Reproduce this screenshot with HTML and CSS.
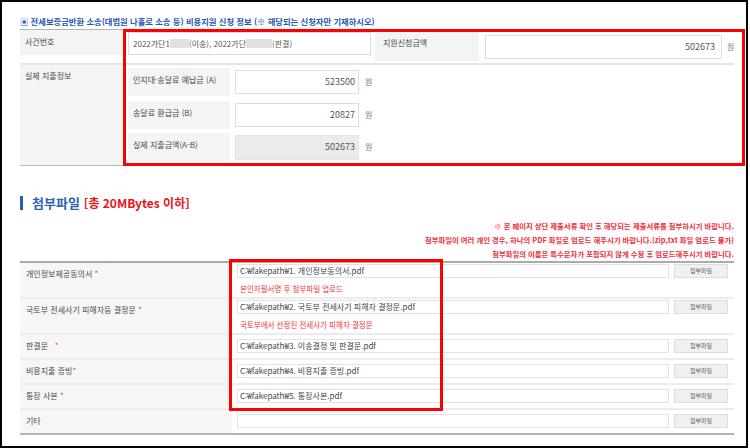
FILE: index.html
```html
<!DOCTYPE html>
<html lang="ko">
<head>
<meta charset="utf-8">
<title>비용지원 신청 정보</title>
<link rel="stylesheet" href="styles.css">
</head>
<body>
<div class="frame">
  <div class="title1">▣ 전세보증금반환 소송(대법원 나홀로 소송 등) 비용지원 신청 정보 (※ 해당되는 신청자만 기재하시오)</div>

  <div class="t1">
    <div class="row r1">
      <div class="th"><div class="lab">사건번호</div></div>
      <div class="td">
        <div class="case">2022가단1<span class="blur b1"></span>(이송), 2022가단<span class="blur b2"></span>(판결)</div>
        <div class="sublab">지원신청금액</div>
        <div class="field">
          <div class="amt">502673</div>
          <span class="won">원</span>
        </div>
      </div>
    </div>
    <div class="row r2">
      <div class="th"><div class="lab tall">실제 지출정보</div></div>
      <div class="td subs">
        <div class="subrow">
          <div class="sublab2">인지대·송달료 예납금 (A)</div>
          <div class="num">523500</div>
          <span class="won">원</span>
        </div>
        <div class="subrow">
          <div class="sublab2">송달료 환급금 (B)</div>
          <div class="num">20827</div>
          <span class="won">원</span>
        </div>
        <div class="subrow">
          <div class="sublab2">실제 지출금액(A-B)</div>
          <div class="num ro">502673</div>
          <span class="won">원</span>
        </div>
      </div>
    </div>
  </div>

  <div class="title2"><span class="bar"></span><span class="blue">첨부파일</span><span class="red">[총 20MBytes 이하]</span></div>

  <div class="notes">
    <div>※ 본 페이지 상단 제출서류 확인 후 해당되는 제출서류를 첨부하시기 바랍니다.</div>
    <div>첨부파일이 여러 개인 경우, 하나의 PDF 파일로 업로드 해주시기 바랍니다.(zip,txt 파일 업로드 불가)</div>
    <div>첨부파일의 이름은 특수문자가 포함되지 않게 수정 후 업로드해주시기 바랍니다.</div>
  </div>

  <div class="t2">
    <div class="frow tall">
      <div class="flab">개인정보제공동의서 <span class="ast">*</span></div>
      <div class="cell">
        <div class="fline"><div class="file">C:₩fakepath₩1. 개인정보동의서.pdf</div><div class="btn">첨부파일</div></div>
        <div class="note">본인자필서명 후 첨부파일 업로드</div>
      </div>
    </div>
    <div class="frow tall">
      <div class="flab">국토부 전세사기 피해자등 결정문 <span class="ast">*</span></div>
      <div class="cell">
        <div class="fline"><div class="file">C:₩fakepath₩2. 국토부 전세사기 피해자 결정문.pdf</div><div class="btn">첨부파일</div></div>
        <div class="note">국토부에서 선정된 전세사기 피해자 결정문</div>
      </div>
    </div>
    <div class="frow">
      <div class="flab">판결문 &nbsp; <span class="ast">*</span></div>
      <div class="cell">
        <div class="fline"><div class="file">C:₩fakepath₩3. 이송결정 및 판결문.pdf</div><div class="btn">첨부파일</div></div>
      </div>
    </div>
    <div class="frow">
      <div class="flab">비용지출 증빙<span class="ast">*</span></div>
      <div class="cell">
        <div class="fline"><div class="file">C:₩fakepath₩4. 비용지출 증빙.pdf</div><div class="btn">첨부파일</div></div>
      </div>
    </div>
    <div class="frow">
      <div class="flab">통장 사본 <span class="ast">*</span></div>
      <div class="cell">
        <div class="fline"><div class="file">C:₩fakepath₩5. 통장사본.pdf</div><div class="btn">첨부파일</div></div>
      </div>
    </div>
    <div class="frow last">
      <div class="flab">기타</div>
      <div class="cell">
        <div class="fline"><div class="file"></div><div class="btn">첨부파일</div></div>
      </div>
    </div>
  </div>

  <div class="anno anno1"></div>
  <div class="anno anno2"></div>
</div>
</body>
</html>
```

FILE: styles.css
```css
html, body {
  margin: 0;
  padding: 0;
  background: #fff;
}

.frame {
  position: relative;
  width: 748px;
  height: 448px;
  box-sizing: border-box;
  border: 2px solid #000;
  padding: 14px 12px 0 18px;
  background: #fff;
  font-family: "Noto Sans CJK KR", "Noto Sans", sans-serif;
  color: #4a4a4a;
  overflow: hidden;
}

.title1 {
  font-size: 8.3px;
  font-weight: 700;
  line-height: 10px;
  color: #2457b5;
  white-space: nowrap;
  margin-bottom: 3px;
}

/* ---------- table 1 ---------- */
.t1 {
  border-top: 1px solid #b4b4b4;
}
.t1 .row {
  display: flex;
}
.t1 .r1 {
  height: 33px;
  border-bottom: 2px solid #e6e6e6;
}
.t1 .r2 {
  height: 100px;
  border-bottom: 1px solid #bcbcbc;
}
.t1 .th {
  width: 102px;
  flex: none;
}
.t1 .lab {
  height: 25px;
  box-sizing: border-box;
  background: #f4f4f4;
  padding: 7px 0 0 5px;
  font-size: 8px;
  line-height: 10px;
}
.t1 .lab.tall {
  height: 100px;
  padding-top: 6px;
}
.t1 .td {
  display: flex;
  align-items: flex-start;
  padding-left: 6px;
}
.case {
  width: 243px;
  height: 23px;
  margin-top: 2px;
  box-sizing: border-box;
  border: 1px solid #dedede;
  padding-left: 4px;
  font-size: 8px;
  line-height: 21px;
  color: #555;
  white-space: nowrap;
}
.blur {
  display: inline-block;
  height: 9px;
  background: #e0e0e0;
  vertical-align: -1px;
}
.blur.b1 { width: 19px; }
.blur.b2 { width: 26px; }

.sublab {
  width: 104px;
  height: 29px;
  margin: 2px 0 0 4px;
  box-sizing: border-box;
  background: #f4f4f4;
  padding: 6px 0 0 8px;
  font-size: 8px;
  line-height: 10px;
}
.field {
  display: flex;
  align-items: center;
  margin: 5px 0 0 6px;
}
.amt {
  width: 237px;
  height: 24px;
  box-sizing: border-box;
  border: 1px solid #dedede;
  padding-right: 6px;
  text-align: right;
  font-size: 9px;
  line-height: 22px;
  color: #555;
}
.won {
  margin-left: 5px;
  font-size: 8px;
  line-height: 10px;
  color: #777;
}

.t1 .td.subs {
  flex-direction: column;
  gap: 4.5px;
  padding-top: 3px;
}
.subrow {
  display: flex;
  align-items: center;
  height: 28px;
}
.sublab2 {
  width: 102px;
  height: 28px;
  box-sizing: border-box;
  background: #f4f4f4;
  padding: 7px 0 0 5px;
  font-size: 8px;
  line-height: 10px;
  white-space: nowrap;
}
.num {
  width: 124px;
  height: 24px;
  margin-left: 5px;
  box-sizing: border-box;
  border: 1px solid #dedede;
  padding-right: 3px;
  text-align: right;
  font-size: 9px;
  line-height: 22px;
  color: #555;
}
.num.ro {
  height: 25px;
  background: #ebebeb;
  border-color: #e4e4e4;
}
.subrow .won {
  margin-left: 6px;
}

/* ---------- section 2 ---------- */
.title2 {
  display: flex;
  align-items: center;
  height: 16px;
  margin-top: 29px;
  font-size: 13px;
  font-weight: 700;
  line-height: 16px;
  white-space: nowrap;
}
.title2 .bar {
  width: 3px;
  height: 14px;
  background: #1f5fc4;
  margin-right: 9px;
}
.title2 .blue {
  color: #2c62b6;
}
.title2 .red {
  color: #e8141b;
  margin-left: 4px;
  font-size: 12px;
}

.notes {
  margin-top: 8px;
  text-align: right;
  font-size: 7.35px;
  font-weight: 700;
  line-height: 14px;
  color: #ee2e3c;
  white-space: nowrap;
}

/* ---------- table 2 ---------- */
.t2 {
  border-top: 2px solid #ababab;
}
.frow {
  display: flex;
  height: 23px;
  border-bottom: 2px solid #ececec;
}
.frow.tall {
  height: 34px;
}
.frow.last {
  border-bottom: 2px solid #b4b4b4;
}
.flab {
  width: 212px;
  flex: none;
  box-sizing: border-box;
  background: #f6f6f6;
  padding: 6px 0 0 6px;
  font-size: 8px;
  line-height: 10px;
  white-space: nowrap;
}
.ast {
  color: #e23a3a;
}
.cell {
  padding: 4px 0 0 5px;
}
.frow.tall .cell {
  padding-top: 1px;
}
.fline {
  display: flex;
  gap: 5px;
}
.file {
  width: 432px;
  height: 14px;
  box-sizing: border-box;
  border: 1px solid #e2e2e2;
  padding-left: 2px;
  font-size: 8px;
  line-height: 12px;
  color: #444;
  white-space: nowrap;
}
.btn {
  width: 54px;
  height: 14px;
  box-sizing: border-box;
  background: #f0f0f0;
  border: 1px solid #dddddd;
  text-align: center;
  font-size: 6px;
  line-height: 12px;
  color: #666;
}
.note {
  margin-top: 6px;
  padding-left: 3px;
  font-size: 7.5px;
  line-height: 10px;
  color: #f0323c;
  white-space: nowrap;
}

/* ---------- red annotation boxes (drawn over the page) ---------- */
.anno {
  position: absolute;
  box-sizing: border-box;
  border: 3px solid #ff0000;
  pointer-events: none;
}
.anno1 {
  left: 121px;
  top: 27px;
  width: 622px;
  height: 137px;
}
.anno2 {
  left: 227px;
  top: 257px;
  width: 214px;
  height: 152px;
}
```
